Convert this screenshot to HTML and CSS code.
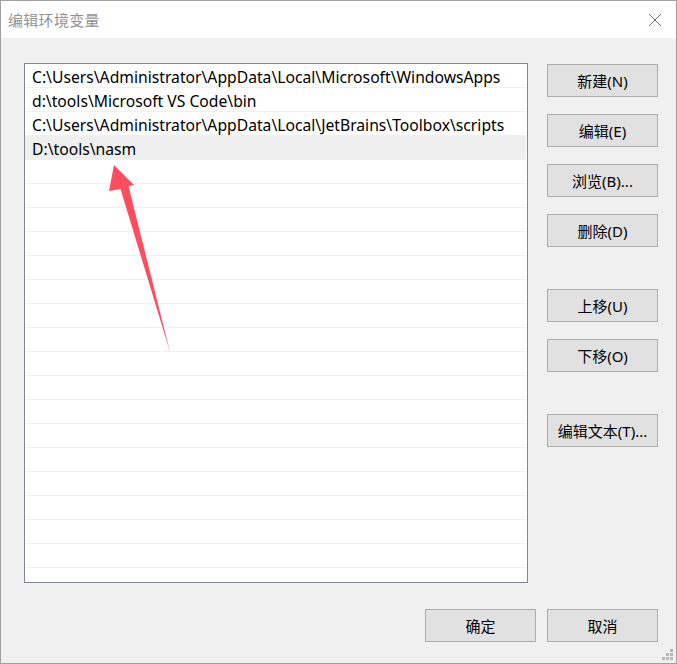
FILE: index.html
```html
<!DOCTYPE html>
<html lang="zh-CN">
<head>
<meta charset="utf-8">
<title>编辑环境变量</title>
<link rel="stylesheet" href="styles.css">
</head>
<body>
<div class="window">
  <div class="titlebar">
    <span class="title">编辑环境变量</span>
    <svg class="close" width="14" height="14" viewBox="0 0 14 14"><path d="M1 1 L13 13 M13 1 L1 13" stroke="#6f6f6f" stroke-width="1" fill="none"/></svg>
  </div>
  <div class="content">
    <div class="main">
      <div class="list">
        <div class="row">C:\Users\Administrator\AppData\Local\Microsoft\WindowsApps</div>
        <div class="row">d:\tools\Microsoft VS Code\bin</div>
        <div class="row">C:\Users\Administrator\AppData\Local\JetBrains\Toolbox\scripts</div>
        <div class="row selected">D:\tools\nasm</div>
        <div class="row"></div><div class="row"></div><div class="row"></div><div class="row"></div>
        <div class="row"></div><div class="row"></div><div class="row"></div><div class="row"></div>
        <div class="row"></div><div class="row"></div><div class="row"></div><div class="row"></div>
        <div class="row"></div><div class="row"></div><div class="row"></div><div class="row"></div>
        <div class="row"></div><div class="row"></div>
      </div>
      <div class="side">
        <div class="group">
          <button class="btn">新建(N)</button>
          <button class="btn">编辑(E)</button>
          <button class="btn">浏览(B)...</button>
          <button class="btn">删除(D)</button>
        </div>
        <div class="group">
          <button class="btn">上移(U)</button>
          <button class="btn">下移(O)</button>
        </div>
        <div class="group">
          <button class="btn">编辑文本(T)...</button>
        </div>
      </div>
    </div>
    <div class="footer">
      <button class="btn">确定</button>
      <button class="btn">取消</button>
    </div>
  </div>
  <svg class="arrow" width="677" height="664" viewBox="0 0 677 664">
    <polygon points="114,165 134,185 128.5,186 170,352 120.5,189 109,191" fill="#fe4d5d"/>
  </svg>
  <svg class="grip" width="14" height="14" viewBox="0 0 14 14">
    <rect x="9" y="1" width="3" height="3" fill="#b8b8b8"/>
    <rect x="5" y="5" width="3" height="3" fill="#b8b8b8"/>
    <rect x="9" y="5" width="3" height="3" fill="#b8b8b8"/>
    <rect x="1" y="9" width="3" height="3" fill="#b8b8b8"/>
    <rect x="5" y="9" width="3" height="3" fill="#b8b8b8"/>
    <rect x="9" y="9" width="3" height="3" fill="#b8b8b8"/>
  </svg>
</div>
</body>
</html>
```
FILE: styles.css
```css
html, body {
  margin: 0;
  padding: 0;
  background: #ffffff;
}
body {
  font-family: "Noto Sans", "Noto Sans CJK SC", sans-serif;
  font-size: 15px;
  color: #000;
}
.window {
  position: relative;
  width: 677px;
  height: 664px;
  box-sizing: border-box;
  border: 1px solid #a0a0a0;
  background: #f0f0f0;
  display: flex;
  flex-direction: column;
  overflow: hidden;
}
.titlebar {
  height: 37px;
  background: #ffffff;
  display: flex;
  align-items: center;
  justify-content: space-between;
  padding: 0 14px 0 7px;
  flex: none;
}
.title {
  font-family: "Noto Sans CJK SC", sans-serif;
  font-size: 15px;
  color: #929292;
  letter-spacing: 0.3px;
}
.close {
  display: block;
}
.content {
  flex: 1;
  display: flex;
  flex-direction: column;
  padding: 25px 18px 0 23px;
}
.main {
  display: flex;
  gap: 19px;
}
.list {
  width: 504px;
  height: 520px;
  box-sizing: border-box;
  border: 1px solid #828790;
  background: #ffffff;
  overflow: hidden;
  flex: none;
}
.row {
  height: 23px;
  box-sizing: content-box;
  border-bottom: 1px solid #f0f0f0;
  padding-left: 7px;
  font-size: 15.7px;
  line-height: 26px;
  white-space: nowrap;
  overflow: hidden;
  color: #000;
}
.row.selected {
  background: #efefef;
  margin-right: 1px;
}
.side {
  display: flex;
  flex-direction: column;
  gap: 42px;
  padding-top: 1px;
}
.group {
  display: flex;
  flex-direction: column;
  gap: 17px;
}
.btn {
  width: 111px;
  height: 33px;
  box-sizing: border-box;
  border: 1px solid #adadad;
  background: #e1e1e1;
  font-family: "Noto Sans", "Noto Sans CJK SC", sans-serif;
  font-size: 15px;
  color: #000;
  padding: 0;
  margin: 0;
}
.footer {
  display: flex;
  justify-content: flex-end;
  gap: 11px;
  margin-top: 26px;
}
.arrow {
  position: absolute;
  left: -1px;
  top: -1px;
  pointer-events: none;
}
.grip {
  position: absolute;
  right: 1px;
  bottom: 1px;
}
```
